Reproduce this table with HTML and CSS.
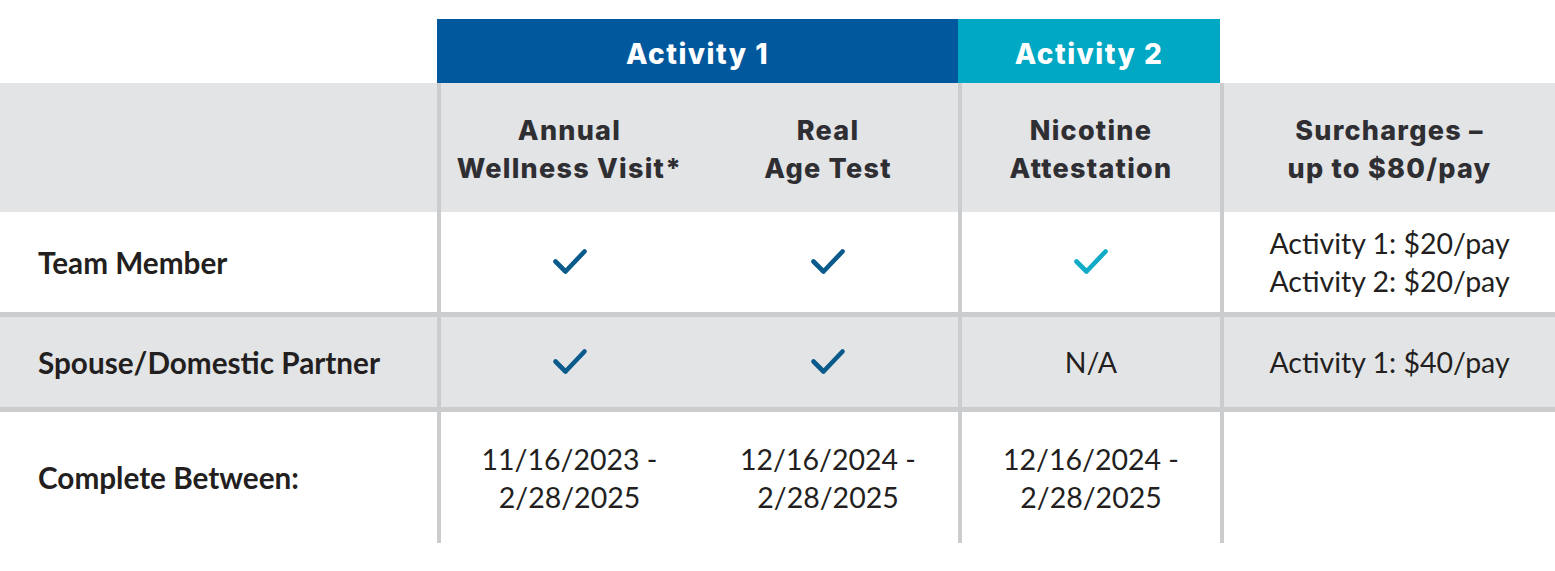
FILE: index.html
```html
<!DOCTYPE html>
<html lang="en">
<head>
<meta charset="utf-8">
<title>Wellness Activities</title>
<link rel="stylesheet" href="styles.css">
</head>
<body>
<div class="table">
  <div class="band band-empty"></div>
  <div class="band band-a1">Activity 1</div>
  <div class="band band-a2">Activity 2</div>
  <div class="band band-empty"></div>

  <div class="cell head"></div>
  <div class="cell head vl"><span>Annual<br>Wellness Visit*</span></div>
  <div class="cell head"><span>Real<br>Age Test</span></div>
  <div class="cell head vl"><span>Nicotine<br>Attestation</span></div>
  <div class="cell head vl"><span>Surcharges –<br>up to $80/pay</span></div>

  <div class="cell label white">Team Member</div>
  <div class="cell white vl"><svg class="check dark" viewBox="0 0 36 28"><path d="M3.5 13.5 L13.5 23.5 L32.5 3.5"/></svg></div>
  <div class="cell white"><svg class="check dark" viewBox="0 0 36 28"><path d="M3.5 13.5 L13.5 23.5 L32.5 3.5"/></svg></div>
  <div class="cell white vl"><svg class="check teal" viewBox="0 0 36 28"><path d="M3.5 13.5 L13.5 23.5 L32.5 3.5"/></svg></div>
  <div class="cell white vl text">Activity 1: $20/pay<br>Activity 2: $20/pay</div>

  <div class="cell label gray hl">Spouse/Domestic Partner</div>
  <div class="cell gray hl vl"><svg class="check dark" viewBox="0 0 36 28"><path d="M3.5 13.5 L13.5 23.5 L32.5 3.5"/></svg></div>
  <div class="cell gray hl"><svg class="check dark" viewBox="0 0 36 28"><path d="M3.5 13.5 L13.5 23.5 L32.5 3.5"/></svg></div>
  <div class="cell gray hl vl text">N/A</div>
  <div class="cell gray hl vl text">Activity 1: $40/pay</div>

  <div class="cell label white hl">Complete Between:</div>
  <div class="cell white hl vl text">11/16/2023 -<br>2/28/2025</div>
  <div class="cell white hl text">12/16/2024 -<br>2/28/2025</div>
  <div class="cell white hl vl text">12/16/2024 -<br>2/28/2025</div>
  <div class="cell white hl vl"></div>
</div>
</body>
</html>
```

FILE: styles.css
```css
html, body {
  margin: 0;
  padding: 0;
  background: #ffffff;
}

.table {
  padding-top: 19px;
  display: grid;
  grid-template-columns: 437px 261px 260px 262px 335px;
  grid-template-rows: 64px 129px 100px 95px 136px;
  width: 1555px;
}

.band {
  display: flex;
  align-items: center;
  justify-content: center;
  padding-top: 5px;
  color: #ffffff;
  font-family: "Inter", sans-serif;
  font-weight: 800;
  font-size: 28px;
  letter-spacing: 1.5px;
}

.band-a1 {
  grid-column: span 2;
  background: #02589d;
}

.band-a2 {
  background: #00a8c4;
}

.cell {
  box-sizing: border-box;
  display: flex;
  align-items: center;
  justify-content: center;
  text-align: center;
  color: #231f20;
}

.vl {
  border-left: 4px solid #cbcccd;
}

.hl {
  border-top: 5px solid #cbcccd;
}

.head {
  background: #e3e4e6;
  font-family: "Inter", sans-serif;
  font-weight: 800;
  font-size: 27px;
  letter-spacing: 1.25px;
  line-height: 38px;
  color: #2f2f33;
  padding-top: 4px;
}

.white {
  background: #ffffff;
}

.gray {
  background: #e3e4e6;
}

.label {
  justify-content: flex-start;
  padding-left: 38px;
  font-family: "Lato", sans-serif;
  font-weight: 700;
  font-size: 29.7px;
}

.text {
  font-family: "Lato", sans-serif;
  font-weight: 400;
  font-size: 28.5px;
  line-height: 38px;
}

.check {
  width: 36px;
  height: 28px;
  fill: none;
  stroke-width: 4.6;
  stroke-linecap: round;
  stroke-linejoin: round;
}

.check.dark {
  stroke: #0a5a8c;
}

.check.teal {
  stroke: #0fabc7;
}
```
